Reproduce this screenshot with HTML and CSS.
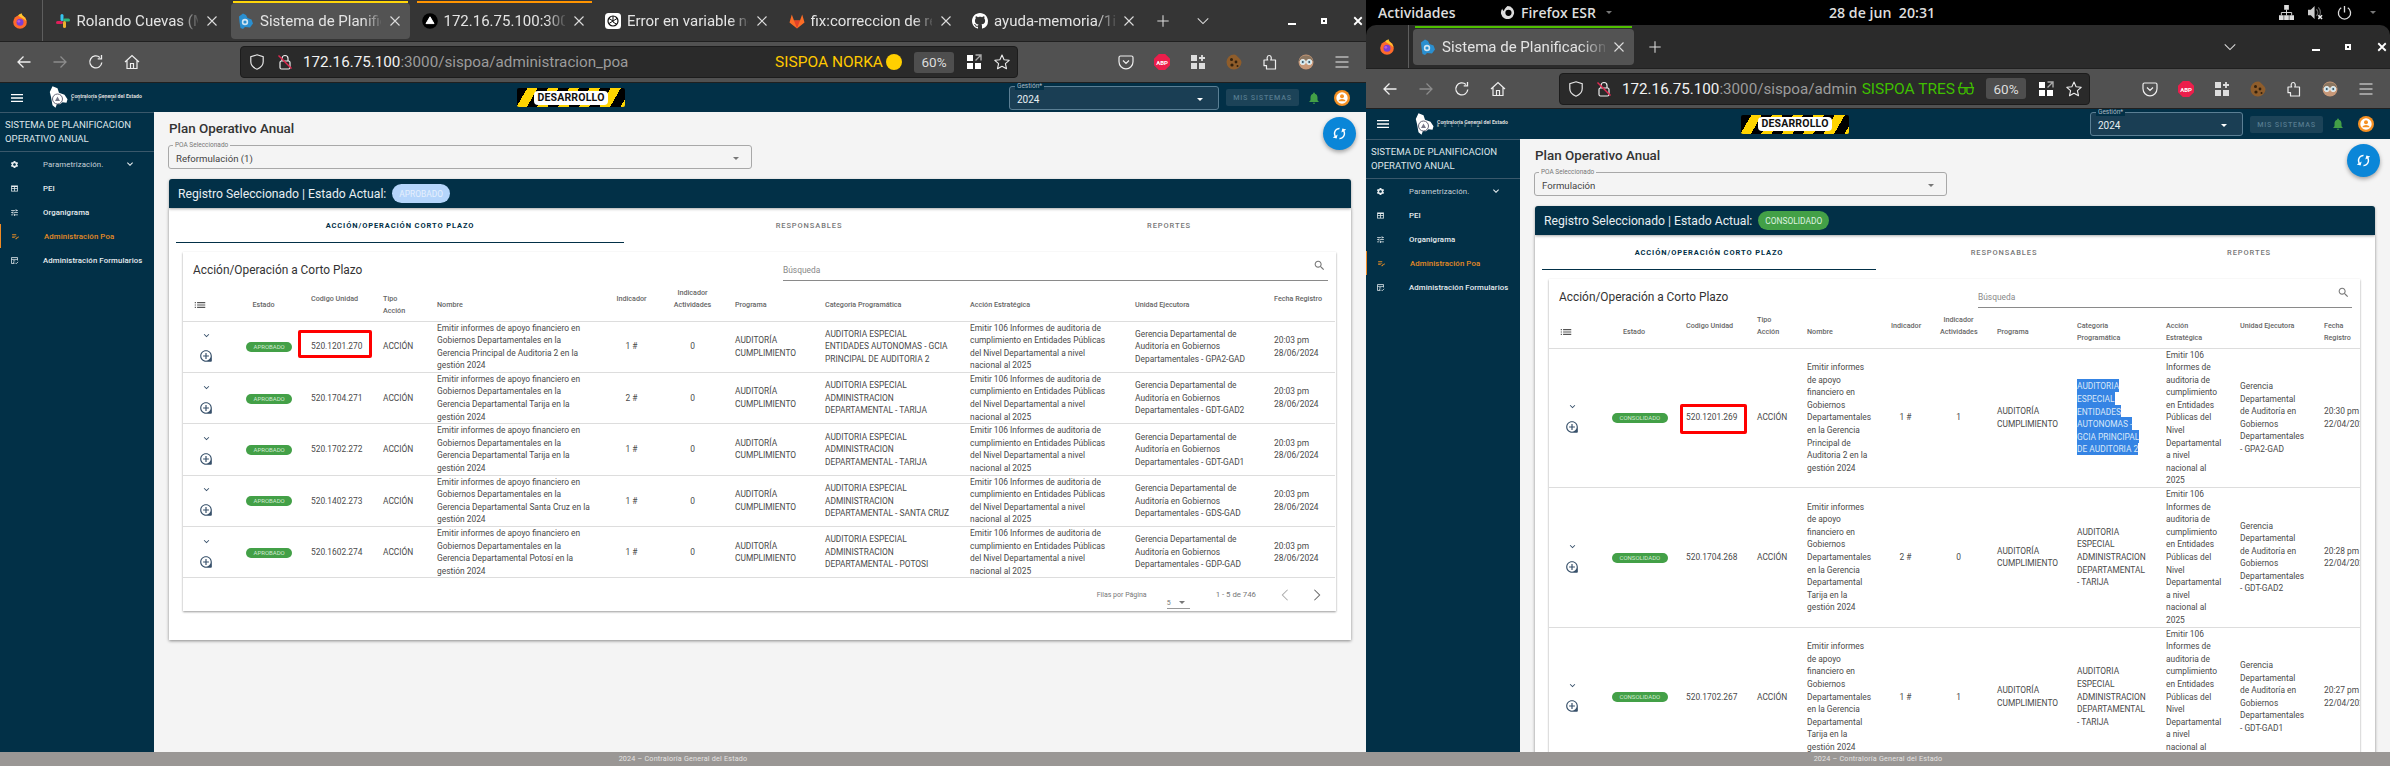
FILE: index.html
```html
<!DOCTYPE html>
<html lang="es">
<head>
<meta charset="utf-8">
<title>Sistema de Planificacion</title>
<link rel="stylesheet" href="styles.css">
</head>
<body>
<svg class="defs" aria-hidden="true">
  <symbol id="i-firefox" viewBox="0 0 16 16"><circle cx="8" cy="9" r="6.8" fill="#ff6a2b"/><path d="M6 2.5C8 .5 10 .6 10 .6c-.4 1.3.6 1.9 1.6 2.8 1.5 1.3 2.6 3 2.9 4.8C12 5.500 8 4 6 2.500z" fill="#ffc52e"/><circle cx="8" cy="9.300" r="3.500" fill="#7b3fd6"/><circle cx="6.800" cy="8.300" r="1.400" fill="#c25bd6"/></symbol>
  <symbol id="i-slack" viewBox="0 0 16 16"><rect x="5.500" y="1" width="3" height="7" rx="1.500" fill="#36c5f0"/><rect x="8" y="5.500" width="7" height="3" rx="1.500" fill="#2eb67d"/><rect x="8" y="8" width="3" height="7" rx="1.500" fill="#ecb22e"/><rect x="1" y="8" width="7" height="3" rx="1.500" fill="#e01e5a"/></symbol>
  <symbol id="i-fav" viewBox="0 0 16 16"><path d="M5 .5l3 1.500 1.500 3 4 1.500 1.500 4-3 4-5-.5-2 2-2.500-1L1.500 9 1 3.500z" fill="#2a8fd0"/><circle cx="7" cy="9" r="3.200" fill="#cfe4f2"/><circle cx="7" cy="9" r="1.600" fill="#2a8fd0"/></symbol>
  <symbol id="i-triangle" viewBox="0 0 16 16"><circle cx="8" cy="8" r="7.800" fill="#000"/><path d="M8 3.800l4 6.800H4z" fill="#fff" stroke="#fff" stroke-linejoin="round"/></symbol>
  <symbol id="i-gpt" viewBox="0 0 16 16"><rect width="16" height="16" rx="3.500" fill="#fff"/><circle cx="8" cy="8" r="5" fill="none" stroke="#111" stroke-width="1.200"/><path d="M8 3v6l4 2.500M4 5.500l4 2.500 4-2.500M4 10.500L8 8" fill="none" stroke="#111"/></symbol>
  <symbol id="i-gitlab" viewBox="0 0 16 16"><path d="M8 15.500L.5 9.500 2.800 1.500l2.200 6h6l2.200-6 2.300 8z" fill="#fc6d26"/><path d="M8 15.500L5 7.500h6z" fill="#e24329"/></symbol>
  <symbol id="i-github" viewBox="0 0 16 16"><path fill="#fff" d="M8 0C3.580 0 0 3.580 0 8c0 3.540 2.290 6.530 5.470 7.590.4.070.55-.17.55-.38 0-.19-.01-.82-.01-1.490-2.010.37-2.530-.49-2.690-.94-.09-.23-.48-.94-.82-1.130-.28-.15-.68-.52-.01-.53.63-.01 1.080.58 1.230.82.72 1.210 1.870.87 2.330.66.07-.52.28-.87.51-1.070-1.780-.2-3.640-.89-3.640-3.950 0-.87.31-1.590.82-2.150-.08-.2-.36-1.020.08-2.120 0 0 .67-.21 2.200.82.64-.18 1.320-.27 2-.27.68 0 1.360.09 2 .27 1.530-1.040 2.200-.82 2.200-.82.44 1.100.16 1.920.08 2.120.51.56.82 1.270.82 2.150 0 3.070-1.870 3.750-3.650 3.950.29.25.54.73.54 1.480 0 1.070-.01 1.930-.01 2.200 0 .21.15.46.55.38A8.013 8.013 0 0016 8c0-4.420-3.580-8-8-8z"/></symbol>
  <symbol id="i-close" viewBox="0 0 16 16"><path d="M3.500 3.500l9 9M12.500 3.500l-9 9" fill="none" stroke="currentColor" stroke-width="1.100"/></symbol>
  <symbol id="i-closebold" viewBox="0 0 16 16"><path d="M3 3l10 10M13 3L3 13" fill="none" stroke="currentColor" stroke-width="2.400"/></symbol>
  <symbol id="i-plus" viewBox="0 0 16 16"><path d="M8 1.500v13M1.500 8h13" fill="none" stroke="currentColor" stroke-width="1.200"/></symbol>
  <symbol id="i-chev" viewBox="0 0 16 16"><path d="M2 5l6 6 6-6" fill="none" stroke="currentColor" stroke-width="1.200"/></symbol>
  <symbol id="i-back" viewBox="0 0 16 16"><path d="M14.500 8H2M7.500 2.500L2 8l5.500 5.500" fill="none" stroke="currentColor" stroke-width="1.300"/></symbol>
  <symbol id="i-forward" viewBox="0 0 16 16"><path d="M1.500 8H14M8.500 2.500L14 8l-5.500 5.500" fill="none" stroke="currentColor" stroke-width="1.300"/></symbol>
  <symbol id="i-reload" viewBox="0 0 16 16"><path d="M13.800 8.500a6 6 0 1 1-1.900-5M13.500 1v3.800H9.700" fill="none" stroke="currentColor" stroke-width="1.300"/></symbol>
  <symbol id="i-home" viewBox="0 0 16 16"><path d="M1 8l7-6.500L15 8M3 6.500v8h10v-8M6.500 14.500v-5h3v5" fill="none" stroke="currentColor" stroke-width="1.200"/></symbol>
  <symbol id="i-shield" viewBox="0 0 16 16"><path d="M8 .8l6.200 2v5c0 3.400-2.600 6-6.200 7.400-3.600-1.400-6.200-4-6.200-7.400v-5z" fill="none" stroke="currentColor" stroke-width="1.200"/></symbol>
  <symbol id="i-lock" viewBox="0 0 16 16"><rect x="3" y="7" width="10" height="8" rx="1.500" fill="none" stroke="#eee" stroke-width="1.200"/><path d="M5 7V4.500a3 3 0 0 1 6 0V7" fill="none" stroke="#eee" stroke-width="1.200"/><path d="M1.500 1.500l13 13" stroke="#e22850" stroke-width="1.400"/></symbol>
  <symbol id="i-ext" viewBox="0 0 16 16"><rect x="1" y="1" width="6" height="6" fill="#fff"/><rect x="1" y="9" width="6" height="6" fill="#fff"/><rect x="9" y="9" width="6" height="6" fill="#fff"/><path d="M9.500 1h5.500v5.500M15 1L9.500 6.500" fill="none" stroke="#aaa" stroke-width="1.400"/></symbol>
  <symbol id="i-star" viewBox="0 0 16 16"><path d="M8 1l2.100 4.700 5.100.6-3.800 3.400 1.100 5L8 12.200l-4.500 2.500 1.100-5L.8 6.300l5.100-.6z" fill="none" stroke="currentColor" stroke-width="1.100" stroke-linejoin="round"/></symbol>
  <symbol id="i-pocket" viewBox="0 0 16 16"><path d="M2.500 2h11A1.500 1.500 0 0 1 15 3.500v4.300a7 7 0 0 1-14 0V3.500A1.500 1.500 0 0 1 2.500 2zM5 6.500l3 3 3-3" fill="none" stroke="currentColor" stroke-width="1.200"/></symbol>
  <symbol id="i-abp" viewBox="0 0 16 16"><path d="M4.800 0h6.400L16 4.800v6.400L11.200 16H4.800L0 11.200V4.800z" fill="#ec1e4b"/><text x="8" y="10.600" text-anchor="middle" class="abp-text">ABP</text></symbol>
  <symbol id="i-gridplus" viewBox="0 0 16 16"><rect x="1" y="1" width="6" height="6" fill="#ddd"/><rect x="1" y="9" width="6" height="6" fill="#ddd"/><rect x="9" y="9" width="6" height="6" fill="#ddd"/><path d="M12 1v6M9 4h6" stroke="#ddd" stroke-width="1.800"/></symbol>
  <symbol id="i-cookie" viewBox="0 0 16 16"><path d="M8 .5c2 0 3 1.500 4.500 3s3 3 3 5a7.500 7.500 0 1 1-7.500-8z" fill="#8f5d2b"/><circle cx="5.500" cy="5.500" r="1.500" fill="#33210d"/><circle cx="10" cy="8" r="1.400" fill="#33210d"/><circle cx="6" cy="11" r="1.600" fill="#33210d"/><circle cx="11.500" cy="12" r="1" fill="#33210d"/></symbol>
  <symbol id="i-puzzle" viewBox="0 0 16 16"><path d="M2 6h3.700c-1-1.300-.8-4.500 1.500-4.500S9.700 4.700 8.700 6h4.800v9h-9v-3.300H2z" fill="none" stroke="currentColor" stroke-width="1.200" stroke-linejoin="round"/></symbol>
  <symbol id="i-face" viewBox="0 0 16 16"><circle cx="8" cy="8" r="7.500" fill="#c79878"/><path d="M.8 7a7.500 7.500 0 0 1 14.400 0z" fill="#8b7660"/><circle cx="4.800" cy="8" r="2.600" fill="#bfe0ea" stroke="#eee"/><circle cx="11.200" cy="8" r="2.600" fill="#bfe0ea" stroke="#eee"/><circle cx="4.800" cy="8" r=".9" fill="#345"/><circle cx="11.200" cy="8" r=".9" fill="#345"/></symbol>
  <symbol id="i-burger" viewBox="0 0 16 16"><path d="M1.500 3h13M1.500 8h13M1.500 13h13" fill="none" stroke="currentColor" stroke-width="1.200"/></symbol>
  <symbol id="i-glasses" viewBox="0 0 20 16"><path d="M1 7h18M2 7l.6 5a2.500 2.500 0 0 0 2.500 2h1.400a2.500 2.500 0 0 0 2.500-2V7M11 7v5a2.500 2.500 0 0 0 2.500 2h1.400a2.500 2.500 0 0 0 2.500-2L18 7M3 7l1-5h2M17 7l-1-5h-2" fill="none" stroke="currentColor" stroke-width="1.500"/></symbol>
  <symbol id="i-menu" viewBox="0 0 24 24"><path fill="currentColor" d="M3 18h18v-2H3v2zm0-5h18v-2H3v2zm0-7v2h18V6H3z"/></symbol>
  <symbol id="i-settings" viewBox="0 0 24 24"><path fill="currentColor" d="M19.140 12.940c.04-.3.06-.61.06-.94 0-.32-.02-.64-.07-.94l2.030-1.580c.18-.14.23-.41.12-.61l-1.920-3.320c-.12-.22-.37-.29-.59-.22l-2.390.96c-.5-.38-1.030-.7-1.620-.94l-.36-2.540c-.04-.24-.24-.41-.48-.41h-3.840c-.24 0-.43.17-.47.41l-.36 2.540c-.59.24-1.130.57-1.620.94l-2.390-.96c-.22-.08-.47 0-.59.22L2.740 8.870c-.12.21-.08.47.12.61l2.030 1.580c-.05.3-.09.63-.09.94s.02.64.07.94l-2.030 1.580c-.18.14-.23.41-.12.61l1.920 3.320c.12.22.37.29.59.22l2.390-.96c.5.38 1.030.7 1.620.94l.36 2.540c.05.24.24.41.48.41h3.840c.24 0 .44-.17.47-.41l.36-2.540c.59-.24 1.130-.56 1.620-.94l2.390.96c.22.08.47 0 .59-.22l1.920-3.320c.12-.22.07-.47-.12-.61l-2.010-1.580zM12 15.600c-1.980 0-3.600-1.620-3.600-3.600s1.620-3.600 3.600-3.600 3.600 1.620 3.600 3.600-1.620 3.600-3.600 3.600z"/></symbol>
  <symbol id="i-table" viewBox="0 0 24 24"><path fill="currentColor" d="M3 4v16h18V4H3zm8 14H5v-5h6v5zm0-7H5V8h6v3zm8 7h-6v-5h6v5zm0-7h-6V8h6v3z"/></symbol>
  <symbol id="i-tune" viewBox="0 0 24 24"><path fill="currentColor" d="M3 17v2h6v-2H3zM3 5v2h10V5H3zm10 16v-2h8v-2h-8v-2h-2v6h2zM7 9v2H3v2h4v2h2V9H7zm14 4v-2H11v2h10zm-6-4h2V7h4V5h-4V3h-2v6z"/></symbol>
  <symbol id="i-note" viewBox="0 0 24 24"><path fill="currentColor" d="M3 10h11v2H3zm0-2h11V6H3zm0 8h7v-2H3zm15.010-3.130l.71-.71c.39-.39 1.020-.39 1.410 0l.71.71c.39.39.39 1.020 0 1.410l-.71.71zm-.71.71L12 16.870V19h2.120l5.300-5.300z"/></symbol>
  <symbol id="i-form" viewBox="0 0 24 24"><path fill="none" stroke="currentColor" stroke-width="2" d="M12 20H4V4h16v8M4 9h16M8 13h6M8 17h3"/><path fill="none" stroke="currentColor" stroke-width="2.200" d="M14 18l2.500 2.500 5-5"/></symbol>
  <symbol id="i-expand" viewBox="0 0 24 24"><path fill="currentColor" d="M16.590 8.590L12 13.170 7.410 8.590 6 10l6 6 6-6z"/></symbol>
  <symbol id="i-search" viewBox="0 0 24 24"><path fill="currentColor" d="M15.500 14h-.79l-.28-.27C15.410 12.590 16 11.110 16 9.500 16 5.910 13.090 3 9.500 3S3 5.910 3 9.500 5.910 16 9.500 16c1.610 0 3.090-.59 4.230-1.570l.27.28v.79l5 4.990L20.490 19l-4.990-5zm-6 0C7.010 14 5 11.990 5 9.500S7.010 5 9.500 5 14 7.010 14 9.500 11.990 14 9.500 14z"/></symbol>
  <symbol id="i-bell" viewBox="0 0 24 24"><path fill="currentColor" d="M12 22c1.100 0 2-.9 2-2h-4c0 1.100.9 2 2 2zm6-6v-5c0-3.070-1.630-5.640-4.500-6.320V4c0-.83-.67-1.500-1.500-1.500s-1.500.67-1.500 1.500v.68C7.640 5.360 6 7.920 6 11v5l-2 2v1h16v-1l-2-2z"/></symbol>
  <symbol id="i-account" viewBox="0 0 24 24"><circle cx="12" cy="12" r="12" fill="#f59023"/><circle cx="12" cy="12" r="8.500" fill="#fff"/><circle cx="12" cy="9.500" r="3" fill="#f59023"/><path d="M6.500 17c.5-2.500 3.500-3.500 5.500-3.500s5 1 5.500 3.500z" fill="#f59023"/></symbol>
  <symbol id="i-list" viewBox="0 0 24 24"><path fill="currentColor" d="M3 13h2v-2H3v2zm0 4h2v-2H3v2zm0-8h2V7H3v2zm4 4h14v-2H7v2zm0 4h14v-2H7v2zM7 7v2h14V7H7z"/></symbol>
  <symbol id="i-loupe" viewBox="0 0 24 24"><path fill="currentColor" d="M13 7h-2v4H7v2h4v4h2v-4h4v-2h-4V7zm-1-5C6.490 2 2 6.490 2 12s4.490 10 10 10h8c1.100 0 2-.9 2-2v-8c0-5.510-4.490-10-10-10zm0 18c-4.410 0-8-3.590-8-8s3.590-8 8-8 8 3.590 8 8-3.590 8-8 8z"/></symbol>
  <symbol id="i-sync" viewBox="0 0 24 24"><path fill="currentColor" d="M12 4V1L8 5l4 4V6c3.310 0 6 2.690 6 6 0 1.010-.25 1.970-.7 2.800l1.460 1.460C19.540 15.030 20 13.570 20 12c0-4.420-3.580-8-8-8zm0 14c-3.310 0-6-2.690-6-6 0-1.010.25-1.970.7-2.800L5.240 7.740C4.460 8.970 4 10.430 4 12c0 4.420 3.580 8 8 8v3l4-4-4-4v3z"/></symbol>
  <symbol id="i-logo" viewBox="0 0 20 23"><path d="M3.500.3l5 2 1.500 4.500 5.500 2 3 4.500-1 3.500-4-.5-2.500 2-3-.5-1.500 4-3-2.500L2 11 .8 6z" fill="#fff"/><circle cx="8.500" cy="13" r="5" fill="#fff" stroke="#667" stroke-width="1"/><path d="M6 15l2.500-4.500L11 15z" fill="#778"/></symbol>
  <symbol id="i-network" viewBox="0 0 16 16"><path fill="#ddd" d="M5.500 0h5v5h-5zM0 11h5v5H0zM5.500 11h5v5h-5zM11 11h5v5h-5z"/><path d="M8 5v6M2.500 11V8h11v3" fill="none" stroke="#ddd"/></symbol>
  <symbol id="i-volume" viewBox="0 0 16 16"><path fill="#ccc" d="M0 5h3l4-4v14l-4-4H0z"/><path d="M9 4.500a5 5 0 0 1 0 7M11 2.500a8 8 0 0 1 0 11" fill="none" stroke="#666" stroke-width="1.300"/><path d="M11 11l4 4M15 11l-4 4" stroke="#eee" stroke-width="1.500"/></symbol>
  <symbol id="i-power" viewBox="0 0 16 16"><path d="M8 1v7M4.500 3a6.500 6.500 0 1 0 7 0" fill="none" stroke="#ddd" stroke-width="1.400"/></symbol>
  <symbol id="i-ffmono" viewBox="0 0 16 16"><path fill="#ddd" d="M8 1a7 7 0 1 1-5.500 2.700c0 1.500.7 2.200 1.600 2.600C4.500 4.500 6 2.500 8 1zm1 4a3.300 3.300 0 1 0 0 6.600A3.300 3.300 0 0 0 9 5z"/></symbol>
</svg>

<main class="desktop">

<section class="window win-left">
  <div class="tabbar">
    <div class="ff-btn"><svg class="ic16"><use href="#i-firefox"/></svg></div>
    <div class="tabs">
      <div class="tab"><svg class="ic16"><use href="#i-slack"/></svg><span class="tab-label">Rolando Cuevas (M</span><svg class="ic-x"><use href="#i-close"/></svg></div>
      <div class="tab active line-yellow"><svg class="ic16"><use href="#i-fav"/></svg><span class="tab-label">Sistema de Planifica</span><svg class="ic-x"><use href="#i-close"/></svg></div>
      <div class="tab line-orange"><svg class="ic16"><use href="#i-triangle"/></svg><span class="tab-label">172.16.75.100:300</span><svg class="ic-x"><use href="#i-close"/></svg></div>
      <div class="tab"><svg class="ic16"><use href="#i-gpt"/></svg><span class="tab-label">Error en variable no</span><svg class="ic-x"><use href="#i-close"/></svg></div>
      <div class="tab"><svg class="ic16"><use href="#i-gitlab"/></svg><span class="tab-label">fix:correccion de re</span><svg class="ic-x"><use href="#i-close"/></svg></div>
      <div class="tab"><svg class="ic16"><use href="#i-github"/></svg><span class="tab-label">ayuda-memoria/1in</span><svg class="ic-x"><use href="#i-close"/></svg></div>
      <svg class="tabbar-plus"><use href="#i-plus"/></svg>
      <svg class="tabbar-chev"><use href="#i-chev"/></svg>
    </div>
    <div class="winctl"><span class="ctl-min"></span><span class="ctl-max"></span><svg class="ctl-close"><use href="#i-closebold"/></svg></div>
  </div>
  <div class="toolbar">
    <div class="nav-icons">
      <svg class="tool-ic"><use href="#i-back"/></svg><svg class="tool-ic dim"><use href="#i-forward"/></svg><svg class="tool-ic"><use href="#i-reload"/></svg><svg class="tool-ic"><use href="#i-home"/></svg>
    </div>
    <div class="urlbar">
      <svg class="url-ic"><use href="#i-shield"/></svg>
      <svg class="url-ic lock"><use href="#i-lock"/></svg>
      <span class="url-text">172.16.75.100<span class="url-rest">:3000/sispoa/administracion_poa</span></span>
      <span class="tag tag-yellow">SISPOA NORKA</span><span class="yellow-dot"></span>
      <span class="zoom-box">60%</span>
      <svg class="url-ic ext"><use href="#i-ext"/></svg>
      <svg class="url-ic star"><use href="#i-star"/></svg>
    </div>
    <div class="tool-actions">
      <svg class="tool-ic"><use href="#i-pocket"/></svg><svg class="tool-ic"><use href="#i-abp"/></svg><svg class="tool-ic"><use href="#i-gridplus"/></svg><svg class="tool-ic"><use href="#i-cookie"/></svg><svg class="tool-ic"><use href="#i-puzzle"/></svg><svg class="tool-ic"><use href="#i-face"/></svg><svg class="tool-ic"><use href="#i-burger"/></svg>
    </div>
  </div>
  <header class="appbar">
    <svg class="app-menu"><use href="#i-menu"/></svg>
    <div class="brand"><svg class="brand-logo"><use href="#i-logo"/></svg><div class="brand-text"><b>Contraloría General del Estado</b><span>B O L I V I A</span></div></div>
    <div class="dev-banner"><span>DESARROLLO</span></div>
    <div class="gestion"><label>Gestión*</label><span>2024</span><i class="caret caret-white"></i></div>
    <button class="mis-sistemas">MIS SISTEMAS</button>
    <svg class="bell"><use href="#i-bell"/></svg>
    <svg class="account"><use href="#i-account"/></svg>
  </header>
  <div class="workspace">
    <nav class="sidebar">
      <div class="side-title">SISTEMA DE PLANIFICACION<br>OPERATIVO ANUAL</div>
      <a class="side-item thin"><svg><use href="#i-settings"/></svg>Parametrización.<svg class="side-chev"><use href="#i-expand"/></svg></a>
      <a class="side-item"><svg><use href="#i-table"/></svg>PEI</a>
      <a class="side-item"><svg><use href="#i-tune"/></svg>Organigrama</a>
      <a class="side-item current"><svg><use href="#i-note"/></svg>Administración Poa</a>
      <a class="side-item"><svg><use href="#i-form"/></svg>Administración Formularios</a>
    </nav>
    <div class="main">
      <button class="fab"><svg><use href="#i-sync"/></svg></button>
      <h1>Plan Operativo Anual</h1>
      <div class="poa-select"><label>POA Seleccionado</label><span>Reformulación (1)</span><i class="caret"></i></div>
      <div class="card-head">Registro Seleccionado | Estado Actual:<span class="status status-blue">APROBADO</span></div>
      <div class="card">
        <div class="nav-tabs"><span class="on">ACCIÓN/OPERACIÓN CORTO PLAZO</span><span>RESPONSABLES</span><span>REPORTES</span></div>
        <div class="inner">
          <div class="inner-top"><h2>Acción/Operación a Corto Plazo</h2><div class="search"><span>Búsqueda</span><svg><use href="#i-search"/></svg></div></div>
          <div class="table-clip">
          <table class="grid">
            <colgroup><col class="c1"><col class="c2"><col class="c3"><col class="c4"><col class="c5"><col class="c6"><col class="c7"><col class="c8"><col class="c9"><col class="c10"><col class="c11"><col class="c12"></colgroup>
            <thead><tr>
              <th class="th-ic"><svg><use href="#i-list"/></svg></th>
              <th class="th-estado">Estado</th>
              <th class="up">Codigo Unidad</th>
              <th>Tipo Acción</th>
              <th>Nombre</th>
              <th class="up mid">Indicador</th>
              <th class="up mid">Indicador Actividades</th>
              <th>Programa</th>
              <th>Categoria Programática</th>
              <th>Acción Estratégica</th>
              <th>Unidad Ejecutora</th>
              <th class="up">Fecha Registro</th>
            </tr></thead>
            <tbody>
              <tr>
                <td class="td-act"><div><svg class="ic-ex"><use href="#i-expand"/></svg><svg class="ic-lp"><use href="#i-loupe"/></svg></div></td>
                <td><span class="chip">APROBADO</span></td>
                <td><span class="mark mark-a">520.1201.270</span></td>
                <td>ACCIÓN</td>
                <td>Emitir informes de apoyo financiero en Gobiernos Departamentales en la Gerencia Principal de Auditoria 2 en la gestión 2024</td>
                <td class="mid">1 #</td><td class="mid">0</td>
                <td>AUDITORÍA CUMPLIMIENTO</td>
                <td>AUDITORIA ESPECIAL ENTIDADES AUTONOMAS - GCIA PRINCIPAL DE AUDITORIA 2</td>
                <td>Emitir 106 Informes de auditoria de cumplimiento en Entidades Públicas del Nivel Departamental a nivel nacional al 2025</td>
                <td>Gerencia Departamental de Auditoría en Gobiernos Departamentales - GPA2-GAD</td>
                <td>20:03 pm 28/06/2024</td>
              </tr>
              <tr>
                <td class="td-act"><div><svg class="ic-ex"><use href="#i-expand"/></svg><svg class="ic-lp"><use href="#i-loupe"/></svg></div></td>
                <td><span class="chip">APROBADO</span></td>
                <td>520.1704.271</td>
                <td>ACCIÓN</td>
                <td>Emitir informes de apoyo financiero en Gobiernos Departamentales en la Gerencia Departamental Tarija en la gestión 2024</td>
                <td class="mid">2 #</td><td class="mid">0</td>
                <td>AUDITORÍA CUMPLIMIENTO</td>
                <td>AUDITORIA ESPECIAL ADMINISTRACION DEPARTAMENTAL - TARIJA</td>
                <td>Emitir 106 Informes de auditoria de cumplimiento en Entidades Públicas del Nivel Departamental a nivel nacional al 2025</td>
                <td>Gerencia Departamental de Auditoría en Gobiernos Departamentales - GDT-GAD2</td>
                <td>20:03 pm 28/06/2024</td>
              </tr>
              <tr>
                <td class="td-act"><div><svg class="ic-ex"><use href="#i-expand"/></svg><svg class="ic-lp"><use href="#i-loupe"/></svg></div></td>
                <td><span class="chip">APROBADO</span></td>
                <td>520.1702.272</td>
                <td>ACCIÓN</td>
                <td>Emitir informes de apoyo financiero en Gobiernos Departamentales en la Gerencia Departamental Tarija en la gestión 2024</td>
                <td class="mid">1 #</td><td class="mid">0</td>
                <td>AUDITORÍA CUMPLIMIENTO</td>
                <td>AUDITORIA ESPECIAL ADMINISTRACION DEPARTAMENTAL - TARIJA</td>
                <td>Emitir 106 Informes de auditoria de cumplimiento en Entidades Públicas del Nivel Departamental a nivel nacional al 2025</td>
                <td>Gerencia Departamental de Auditoría en Gobiernos Departamentales - GDT-GAD1</td>
                <td>20:03 pm 28/06/2024</td>
              </tr>
              <tr>
                <td class="td-act"><div><svg class="ic-ex"><use href="#i-expand"/></svg><svg class="ic-lp"><use href="#i-loupe"/></svg></div></td>
                <td><span class="chip">APROBADO</span></td>
                <td>520.1402.273</td>
                <td>ACCIÓN</td>
                <td>Emitir informes de apoyo financiero en Gobiernos Departamentales en la Gerencia Departamental Santa Cruz en la gestión 2024</td>
                <td class="mid">1 #</td><td class="mid">0</td>
                <td>AUDITORÍA CUMPLIMIENTO</td>
                <td>AUDITORIA ESPECIAL ADMINISTRACION DEPARTAMENTAL - SANTA CRUZ</td>
                <td>Emitir 106 Informes de auditoria de cumplimiento en Entidades Públicas del Nivel Departamental a nivel nacional al 2025</td>
                <td>Gerencia Departamental de Auditoría en Gobiernos Departamentales - GDS-GAD</td>
                <td>20:03 pm 28/06/2024</td>
              </tr>
              <tr>
                <td class="td-act"><div><svg class="ic-ex"><use href="#i-expand"/></svg><svg class="ic-lp"><use href="#i-loupe"/></svg></div></td>
                <td><span class="chip">APROBADO</span></td>
                <td>520.1602.274</td>
                <td>ACCIÓN</td>
                <td>Emitir informes de apoyo financiero en Gobiernos Departamentales en la Gerencia Departamental Potosí en la gestión 2024</td>
                <td class="mid">1 #</td><td class="mid">0</td>
                <td>AUDITORÍA CUMPLIMIENTO</td>
                <td>AUDITORIA ESPECIAL ADMINISTRACION DEPARTAMENTAL - POTOSI</td>
                <td>Emitir 106 Informes de auditoria de cumplimiento en Entidades Públicas del Nivel Departamental a nivel nacional al 2025</td>
                <td>Gerencia Departamental de Auditoría en Gobiernos Departamentales - GDP-GAD</td>
                <td>20:03 pm 28/06/2024</td>
              </tr>
            </tbody>
          </table>
          </div>
          <div class="pager">
            <span class="pg-label">Filas por Página</span>
            <span class="pg-size">5<i class="caret"></i></span>
            <span class="pg-range">1 - 5 de 746</span>
            <svg class="pg-arrow"><use href="#i-chev"/></svg>
            <svg class="pg-arrow next"><use href="#i-chev"/></svg>
          </div>
        </div>
      </div>
    </div>
  </div>
  <footer class="foot">2024 – Contraloría General del Estado</footer>
</section>

<section class="window win-right">
  <div class="gnome-bar">
    <span class="g-act">Actividades</span>
    <span class="g-app"><svg><use href="#i-ffmono"/></svg>Firefox ESR<i class="caret caret-g"></i></span>
    <span class="g-clock">28 de jun&nbsp;&nbsp;20:31</span>
    <span class="g-tray"><svg><use href="#i-network"/></svg><svg><use href="#i-volume"/></svg><svg><use href="#i-power"/></svg><i class="caret caret-g"></i></span>
  </div>
  <div class="tabbar">
    <div class="ff-btn"><svg class="ic16"><use href="#i-firefox"/></svg></div>
    <div class="tabs">
      <div class="tab active line-green"><svg class="ic16"><use href="#i-fav"/></svg><span class="tab-label">Sistema de Planificacion O</span><svg class="ic-x"><use href="#i-close"/></svg></div>
      <svg class="tabbar-plus"><use href="#i-plus"/></svg>
      <svg class="tabbar-chev"><use href="#i-chev"/></svg>
    </div>
    <div class="winctl"><span class="ctl-min"></span><span class="ctl-max"></span><svg class="ctl-close"><use href="#i-closebold"/></svg></div>
  </div>
  <div class="toolbar">
    <div class="nav-icons">
      <svg class="tool-ic"><use href="#i-back"/></svg><svg class="tool-ic dim"><use href="#i-forward"/></svg><svg class="tool-ic"><use href="#i-reload"/></svg><svg class="tool-ic"><use href="#i-home"/></svg>
    </div>
    <div class="urlbar">
      <svg class="url-ic"><use href="#i-shield"/></svg>
      <svg class="url-ic lock"><use href="#i-lock"/></svg>
      <span class="url-text">172.16.75.100<span class="url-rest">:3000/sispoa/admin</span></span>
      <span class="tag tag-green">SISPOA TRES</span><svg class="glasses"><use href="#i-glasses"/></svg>
      <span class="zoom-box">60%</span>
      <svg class="url-ic ext"><use href="#i-ext"/></svg>
      <svg class="url-ic star"><use href="#i-star"/></svg>
    </div>
    <div class="tool-actions">
      <svg class="tool-ic"><use href="#i-pocket"/></svg><svg class="tool-ic"><use href="#i-abp"/></svg><svg class="tool-ic"><use href="#i-gridplus"/></svg><svg class="tool-ic"><use href="#i-cookie"/></svg><svg class="tool-ic"><use href="#i-puzzle"/></svg><svg class="tool-ic"><use href="#i-face"/></svg><svg class="tool-ic"><use href="#i-burger"/></svg>
    </div>
  </div>
  <header class="appbar">
    <svg class="app-menu"><use href="#i-menu"/></svg>
    <div class="brand"><svg class="brand-logo"><use href="#i-logo"/></svg><div class="brand-text"><b>Contraloría General del Estado</b><span>B O L I V I A</span></div></div>
    <div class="dev-banner"><span>DESARROLLO</span></div>
    <div class="gestion"><label>Gestión*</label><span>2024</span><i class="caret caret-white"></i></div>
    <button class="mis-sistemas">MIS SISTEMAS</button>
    <svg class="bell"><use href="#i-bell"/></svg>
    <svg class="account"><use href="#i-account"/></svg>
  </header>
  <div class="workspace">
    <nav class="sidebar">
      <div class="side-title">SISTEMA DE PLANIFICACION<br>OPERATIVO ANUAL</div>
      <a class="side-item thin"><svg><use href="#i-settings"/></svg>Parametrización.<svg class="side-chev"><use href="#i-expand"/></svg></a>
      <a class="side-item"><svg><use href="#i-table"/></svg>PEI</a>
      <a class="side-item"><svg><use href="#i-tune"/></svg>Organigrama</a>
      <a class="side-item current"><svg><use href="#i-note"/></svg>Administración Poa</a>
      <a class="side-item"><svg><use href="#i-form"/></svg>Administración Formularios</a>
    </nav>
    <div class="main">
      <button class="fab"><svg><use href="#i-sync"/></svg></button>
      <h1>Plan Operativo Anual</h1>
      <div class="poa-select"><label>POA Seleccionado</label><span>Formulación</span><i class="caret"></i></div>
      <div class="card-head">Registro Seleccionado | Estado Actual:<span class="status status-green">CONSOLIDADO</span></div>
      <div class="card">
        <div class="nav-tabs"><span class="on">ACCIÓN/OPERACIÓN CORTO PLAZO</span><span>RESPONSABLES</span><span>REPORTES</span></div>
        <div class="inner">
          <div class="inner-top"><h2>Acción/Operación a Corto Plazo</h2><div class="search"><span>Búsqueda</span><svg><use href="#i-search"/></svg></div></div>
          <div class="table-clip">
          <table class="grid">
            <colgroup><col class="c1"><col class="c2"><col class="c3"><col class="c4"><col class="c5"><col class="c6"><col class="c7"><col class="c8"><col class="c9"><col class="c10"><col class="c11"><col class="c12"></colgroup>
            <thead><tr>
              <th class="th-ic"><svg><use href="#i-list"/></svg></th>
              <th class="th-estado">Estado</th>
              <th class="up">Codigo Unidad</th>
              <th class="up">Tipo Acción</th>
              <th>Nombre</th>
              <th class="up mid">Indicador</th>
              <th class="up mid">Indicador Actividades</th>
              <th>Programa</th>
              <th>Categoria Programática</th>
              <th>Acción Estratégica</th>
              <th class="up">Unidad Ejecutora</th>
              <th>Fecha Registro</th>
            </tr></thead>
            <tbody>
              <tr>
                <td class="td-act"><div><svg class="ic-ex"><use href="#i-expand"/></svg><svg class="ic-lp"><use href="#i-loupe"/></svg></div></td>
                <td><span class="chip">CONSOLIDADO</span></td>
                <td><span class="mark mark-b">520.1201.269</span></td>
                <td>ACCIÓN</td>
                <td>Emitir informes de apoyo financiero en Gobiernos Departamentales en la Gerencia Principal de Auditoria 2 en la gestión 2024</td>
                <td class="mid">1 #</td><td class="mid">1</td>
                <td>AUDITORÍA CUMPLIMIENTO</td>
                <td><span class="sel">AUDITORIA ESPECIAL ENTIDADES AUTONOMAS - GCIA PRINCIPAL DE AUDITORIA 2</span></td>
                <td>Emitir 106 Informes de auditoria de cumplimiento en Entidades Públicas del Nivel Departamental a nivel nacional al 2025</td>
                <td>Gerencia Departamental de Auditoría en Gobiernos Departamentales - GPA2-GAD</td>
                <td>20:30 pm 22/04/2024</td>
              </tr>
              <tr>
                <td class="td-act"><div><svg class="ic-ex"><use href="#i-expand"/></svg><svg class="ic-lp"><use href="#i-loupe"/></svg></div></td>
                <td><span class="chip">CONSOLIDADO</span></td>
                <td>520.1704.268</td>
                <td>ACCIÓN</td>
                <td>Emitir informes de apoyo financiero en Gobiernos Departamentales en la Gerencia Departamental Tarija en la gestión 2024</td>
                <td class="mid">2 #</td><td class="mid">0</td>
                <td>AUDITORÍA CUMPLIMIENTO</td>
                <td>AUDITORIA ESPECIAL ADMINISTRACION DEPARTAMENTAL - TARIJA</td>
                <td>Emitir 106 Informes de auditoria de cumplimiento en Entidades Públicas del Nivel Departamental a nivel nacional al 2025</td>
                <td>Gerencia Departamental de Auditoría en Gobiernos Departamentales - GDT-GAD2</td>
                <td>20:28 pm 22/04/2024</td>
              </tr>
              <tr>
                <td class="td-act"><div><svg class="ic-ex"><use href="#i-expand"/></svg><svg class="ic-lp"><use href="#i-loupe"/></svg></div></td>
                <td><span class="chip">CONSOLIDADO</span></td>
                <td>520.1702.267</td>
                <td>ACCIÓN</td>
                <td>Emitir informes de apoyo financiero en Gobiernos Departamentales en la Gerencia Departamental Tarija en la gestión 2024</td>
                <td class="mid">1 #</td><td class="mid">1</td>
                <td>AUDITORÍA CUMPLIMIENTO</td>
                <td>AUDITORIA ESPECIAL ADMINISTRACION DEPARTAMENTAL - TARIJA</td>
                <td>Emitir 106 Informes de auditoria de cumplimiento en Entidades Públicas del Nivel Departamental a nivel nacional al 2025</td>
                <td>Gerencia Departamental de Auditoría en Gobiernos Departamentales - GDT-GAD1</td>
                <td>20:27 pm 22/04/2024</td>
              </tr>
            </tbody>
          </table>
          </div>
        </div>
      </div>
    </div>
  </div>
  <footer class="foot">2024 – Contraloría General del Estado</footer>
</section>

</main>
</body>
</html>
```

FILE: styles.css
```css
* { box-sizing: border-box; }
html, body { margin: 0; padding: 0; }
body { background: #333; font-family: Roboto, "Liberation Sans", sans-serif; overflow: hidden; }
svg { display: block; flex: none; }
.defs { width: 0; height: 0; position: absolute; }
.abp-text { font: 700 6px Roboto, sans-serif; fill: #fff; }

.desktop { display: flex; width: 2390px; height: 766px; overflow: hidden; }
.window { display: flex; flex-direction: column; height: 766px; overflow: hidden; }
.win-left { width: 1366px; background: #353535; }
.win-right { width: 1024px; background: #000; }

/* GNOME panel */
.gnome-bar { height: 25px; flex: none; background: #000; color: #ddd; display: flex; align-items: center; font: 600 14px "Open Sans", sans-serif; position: relative; }
.g-act { margin-left: 12px; width: 122px; }
.g-app { display: flex; align-items: center; gap: 6px; }
.g-app svg { width: 15px; height: 15px; }
.caret-g { margin-left: 4px; border-left: 6px solid transparent; border-right: 6px solid transparent; border-top: 6px solid #ddd; }
.g-clock { margin-left: 217px; font-size: 14.200px; }
.g-tray { margin-left: auto; margin-right: 14px; display: flex; align-items: center; gap: 14px; }
.g-tray svg { width: 15px; height: 15px; }

/* Tab bar */
.tabbar { height: 42px; flex: none; display: flex; align-items: center; background: #353535; border-bottom: 1px solid #202020; }
.win-right .tabbar { height: 44px; background: #2b2b2b; border-radius: 10px 10px 0 0; }
.ff-btn { width: 43px; height: 100%; display: flex; align-items: center; justify-content: center; border-right: 1px solid #5e5e5e; }
.win-left .ff-btn { padding-right: 3px; }
.ic16 { width: 16px; height: 16px; }
.tabs { flex: 1; display: flex; align-items: center; min-width: 0; }
.win-left .tabs { padding-left: 4.5px; }
.win-right .tabs { padding-left: 4px; }
.tab { width: 179px; height: 36px; margin-right: 4.500px; display: flex; align-items: center; gap: 6px; padding: 0 7px; border-radius: 4px; color: #e4e4e4; font-size: 15px; position: relative; flex: none; }
.win-right .tab { width: 221px; }
.tab.active { background: #535353; }
.tab-label { flex: 1; min-width: 0; white-space: nowrap; overflow: hidden; -webkit-mask-image: linear-gradient(90deg, #000 85%, rgba(0,0,0,.15) 100%); mask-image: linear-gradient(90deg, #000 85%, rgba(0,0,0,.15) 100%); }
.ic-x { width: 16px; height: 16px; color: #ddd; }
.line-yellow::before, .line-orange::before, .line-green::before { content: ""; position: absolute; left: 2px; right: 2px; top: -2px; height: 2px; }
.line-yellow::before { background: #ffd60a; }
.line-orange::before { background: #ff9400; }
.line-green::before { background: #4fbf00; top: -3px; }
.tabbar-plus { width: 14px; height: 14px; color: #ddd; margin-left: 7px; }
.tabbar-chev { width: 14px; height: 14px; color: #ddd; margin-left: 26px; }
.win-right .tabbar-plus { margin-left: 9px; }
.win-right .tabbar-chev { margin-left: 561px; }
.winctl { display: flex; align-items: center; width: 110px; flex: none; color: #fff; position: relative; height: 16px; margin-left: auto; }
.ctl-min { width: 8px; height: 2px; background: #fff; margin: 6px 0 0 32px; }
.ctl-max { width: 6px; height: 6px; border: 2px solid #fff; margin-left: 25px; }
.ctl-close { width: 12px; height: 12px; margin-left: 25px; color: #fff; }

/* Toolbar */
.toolbar { height: 41px; flex: none; display: flex; align-items: center; background: #515151; border-bottom: 1px solid #202020; padding: 0 6px; }
.win-right .toolbar { height: 40px; }
.nav-icons, .tool-actions { display: flex; color: #eee; }
.tool-actions { margin-left: auto; }
.tool-ic { width: 36px; height: 16px; color: #eee; }
.tool-ic.dim { color: #8c8c8c; }
.urlbar { height: 32px; flex: none; display: flex; align-items: center; background: #2a2a2a; border: 1px solid #1c1c1c; border-radius: 4px; padding: 0 7px 0 8px; }
.win-left .urlbar { width: 778px; margin-left: 90px; }
.win-right .urlbar { width: 531px; margin-left: 43px; }
.url-ic { width: 16px; height: 16px; color: #e6e6e6; }
.url-ic.lock { margin-left: 12px; }
.url-ic.ext { margin-left: 12px; }
.url-ic.star { margin-left: 12px; color: #eee; }
.url-text { flex: 1; min-width: 0; margin-left: 10px; font-size: 15.200px; color: #f2f2f2; white-space: nowrap; overflow: hidden; }
.url-rest { color: #9c9c9c; }
.tag { font-size: 15.500px; margin-left: 4px; white-space: nowrap; }
.tag-yellow { color: #ffc800; }
.tag-green { color: #3fbf00; }
.yellow-dot { width: 16px; height: 16px; border-radius: 50%; background: #ffcf00; margin-left: 3px; }
.glasses { width: 18px; height: 15px; color: #3fbf00; margin-left: 2px; }
.zoom-box { width: 40px; height: 21px; margin-left: 12px; background: #4e4e4e; border-radius: 3px; color: #ddd; font-size: 13.500px; display: flex; align-items: center; justify-content: center; }
.win-right .zoom-box { margin-left: 11px; }

/* App bar */
.appbar { height: 29px; flex: none; display: flex; align-items: center; background: #023047; padding-right: 16px; }
.win-right .appbar { height: 30px; }
.app-menu { width: 16px; height: 16px; color: #fff; margin-left: 9px; }
.brand { width: 91px; display: flex; align-items: center; margin-left: 24px; flex: none; }
.brand-logo { width: 20px; height: 23px; }
.brand-text { margin-left: 2px; display: flex; flex-direction: column; color: #ddd; font-size: 5.200px; line-height: 5px; white-space: nowrap; }
.brand-text b { font-weight: 700; }
.brand-text span { font-size: 3px; line-height: 3px; letter-spacing: 2.200px; }
.dev-banner { width: 108px; height: 19px; flex: none; border-radius: 2px; display: flex; align-items: center; justify-content: center; background: repeating-linear-gradient(120deg, #000 0 9px, #ffd400 9px 18px); }
.win-left .dev-banner { margin-left: 377px; }
.win-right .dev-banner { margin-left: 235px; }
.dev-banner span { background: #fff; border-radius: 4px; color: #111; font-weight: 700; font-size: 10.500px; letter-spacing: .2px; height: 14px; line-height: 14px; padding: 0 3px; }
.gestion { height: 24px; margin-left: auto; flex: none; display: flex; align-items: center; padding: 3px 7px 0; border: 1px solid #5b7f94; border-radius: 3px; background: #1a3e54; color: #e8eef2; font-size: 10px; position: relative; }
.win-left .gestion { width: 210px; }
.win-right .gestion { width: 153px; }
.gestion label { position: absolute; left: 5px; top: -4px; font-size: 6.500px; line-height: 7px; padding: 0 2px; background: #023047; color: #aab9c3; }
.caret { display: inline-block; width: 0; height: 0; border-left: 3px solid transparent; border-right: 3px solid transparent; border-top: 3px solid #777; }
.caret-white { border-top-color: #fff; margin-left: auto; margin-right: 8px; }
.mis-sistemas { width: 73px; height: 17px; margin-left: 7px; flex: none; border: 0; border-radius: 2px; background: #1c4358; color: #557a8e; font: 500 7.200px Roboto, sans-serif; letter-spacing: .8px; padding: 0; }
.bell { width: 14px; height: 14px; color: #43a047; margin-left: 8px; }
.account { width: 16px; height: 16px; margin-left: 13px; }

/* Workspace */
.workspace { flex: 1; min-height: 0; display: flex; overflow: hidden; background: #f4f4f4; }
.sidebar { width: 154px; flex: none; background: #023047; color: #fff; border-top: 1px solid #3a586b; }
.side-title { height: 39px; padding: 5px 5px 0; font-size: 9.600px; line-height: 14px; color: #dfe6ea; border-bottom: 1px solid #3a586b; white-space: nowrap; }
.side-item { height: 24px; display: flex; align-items: center; padding-left: 9px; font-size: 7.800px; font-weight: 500; letter-spacing: .1px; color: #e8edf0; border-left: 1px solid transparent; }
.side-item svg { width: 9px; height: 9px; margin-right: 24px; color: #e8edf0; }
.side-item.thin { font-weight: 400; color: #c7d2d9; }
.side-item .side-chev { width: 12px; height: 12px; margin: 0; position: relative; left: 21px; }
.side-item.current { border-left-color: #f08a24; color: #e58b25; padding-left: 10px; }
.side-item.current svg { color: #e58b25; }

/* Main */
.main { flex: 1; min-width: 0; padding: 0 15px; position: relative; }
.main h1 { margin: 7px 0 0; height: 20px; line-height: 20px; font-size: 13.400px; font-weight: 500; color: #333; }
.fab { position: absolute; right: 10.500px; top: 4.500px; width: 33px; height: 33px; padding: 8px; border: 0; border-radius: 50%; background: #0a86d8; color: #fff; box-shadow: 0 2px 4px rgba(0,0,0,.35); }
.fab svg { width: 17px; height: 17px; transform: rotate(60deg); }
.poa-select { width: calc(50% - 7px); height: 24px; margin-top: 6px; margin-left: -1px; display: flex; align-items: center; padding: 2px 7px 0; border: 1px solid #a8a8a8; border-radius: 3px; font-size: 9.600px; color: #444; position: relative; }
.poa-select label { position: absolute; left: 4px; top: -4px; padding: 0 2px; font-size: 6.500px; line-height: 7px; background: #f4f4f4; color: #777; }
.poa-select .caret { margin-left: auto; margin-right: 5px; }
.card-head { height: 29px; margin-top: 10px; display: flex; align-items: center; padding-left: 9px; background: #023047; border-radius: 3px 3px 0 0; color: #e8eef2; font-size: 12.200px; box-shadow: 0 1px 3px rgba(0,0,0,.35); position: relative; }
.status { height: 19px; margin-left: 6px; padding: 0 7px; border-radius: 10px; display: flex; align-items: center; font-size: 8.400px; }
.status-blue { background: #b5d5fb; color: #e6f0fd; }
.status-green { background: #43a047; color: #dff2e0; }
.card { background: #fff; box-shadow: 0 1px 3px rgba(0,0,0,.45); padding: 0 15px 29px 14px; }
.win-right .card { padding-bottom: 200px; }
.nav-tabs { display: grid; height: 35px; margin: 0 -8px 0 -7px; color: #777; font-size: 7.500px; font-weight: 500; letter-spacing: .9px; }
.win-left .nav-tabs { grid-template-columns: 448px 370px 350px; }
.win-right .nav-tabs { grid-template-columns: 334px 256px 234px; }
.nav-tabs span { display: flex; align-items: center; justify-content: center; white-space: nowrap; }
.nav-tabs .on { color: #023047; font-weight: 700; border-bottom: 1px solid #023047; }
.inner { margin-top: 9px; box-shadow: 0 1px 2px rgba(0,0,0,.4); }
.inner-top { height: 29px; padding: 7px 8px 0 10px; display: flex; align-items: stretch; justify-content: space-between; }
.inner-top h2 { margin: 0; font-size: 11.900px; font-weight: 400; color: #333; line-height: 22px; white-space: nowrap; }
.search { display: flex; align-items: center; justify-content: space-between; border-bottom: 1px solid #8a8a8a; font-size: 8.400px; color: #888; padding-right: 2px; }
.win-left .search { width: 545px; }
.win-right .search { width: 374px; }
.search svg { width: 13px; height: 13px; color: #777; margin-bottom: 9px; }

/* Table */
.table-clip { overflow: hidden; }
.grid { table-layout: fixed; border-collapse: collapse; font-size: 8.400px; line-height: 12.600px; color: #4a4a4a; }
.win-left .grid { width: 1152px; }
.win-right .grid { width: 851px; }
.win-left .c1 { width: 57px; } .win-left .c2 { width: 65px; } .win-left .c3 { width: 72px; } .win-left .c4 { width: 54px; }
.win-left .c5 { width: 176px; } .win-left .c6 { width: 57px; } .win-left .c7 { width: 65px; } .win-left .c8 { width: 90px; }
.win-left .c9 { width: 145px; } .win-left .c10 { width: 165px; } .win-left .c11 { width: 139px; } .win-left .c12 { width: 67px; }
.win-right .c1 { width: 57px; } .win-right .c2 { width: 74px; } .win-right .c3 { width: 71px; } .win-right .c4 { width: 50px; }
.win-right .c5 { width: 84px; } .win-right .c6 { width: 49px; } .win-right .c7 { width: 57px; } .win-right .c8 { width: 80px; }
.win-right .c9 { width: 89px; } .win-right .c10 { width: 74px; } .win-right .c11 { width: 84px; } .win-right .c12 { width: 82px; }
.grid th { height: 40px; padding: 8px 14px 0 6px; font-size: 7.200px; line-height: 11.400px; font-weight: 500; color: #666; text-align: left; vertical-align: middle; border-bottom: 1px solid #ddd; }
.grid th.up { padding-top: 0; padding-bottom: 4px; }
.win-left .grid th:last-child { padding-right: 0; }
.win-right .grid th:last-child { padding-right: 36px; }
.grid .mid { text-align: center; }
.grid th.th-ic { padding-left: 10px; color: #555; }
.th-ic svg { width: 14px; height: 14px; }
.grid th.th-estado { padding: 8px 18px 0 0; text-align: center; }
.grid td { padding: 0 14px 0 6px; vertical-align: middle; border-bottom: 1px solid #ddd; }
.grid td.td-act { padding: 0; }
.td-act div { width: 46px; display: flex; flex-direction: column; align-items: center; }
.ic-ex { width: 11px; height: 11px; color: #37506a; margin-bottom: 8px; }
.ic-lp { width: 14px; height: 14px; color: #37506a; }
.chip { display: inline-block; height: 10px; line-height: 10px; padding: 0 7.500px; border-radius: 5px; background: #43a047; color: #cfe9d0; font-size: 6px; white-space: nowrap; vertical-align: middle; }
.mark { position: relative; white-space: nowrap; }
.mark::after { content: ""; position: absolute; border: 3px solid #f00; border-radius: 2px; }
.mark-a::after { left: -13px; right: -9px; top: -11px; bottom: -7px; }
.mark-b::after { left: -6px; right: -9px; top: -8px; bottom: -12px; }
.sel { background: #3584e4; color: #d8e7f8; padding: 1.500px 0; -webkit-box-decoration-break: clone; box-decoration-break: clone; }

/* Pager */
.pager { height: 33px; display: flex; align-items: center; justify-content: flex-end; font-size: 7px; color: #777; padding-right: 12px; }
.pg-size { width: 23px; height: 20px; margin: 0 26px 0 20px; padding-top: 8px; border-bottom: 1px solid #999; display: flex; align-items: center; gap: 8px; line-height: 8px; align-self: flex-end; margin-bottom: 2px; }
.pg-range { margin-right: 22px; font-size: 7.800px; }
.pg-arrow { width: 14px; height: 14px; color: #aaa; transform: rotate(90deg); }
.pg-arrow.next { transform: rotate(-90deg); margin-left: 18px; color: #666; }

/* Footer */
.foot { height: 14px; flex: none; background: #9a9795; color: #e6e4e2; font-size: 7.200px; letter-spacing: .2px; line-height: 14px; text-align: center; }
```
